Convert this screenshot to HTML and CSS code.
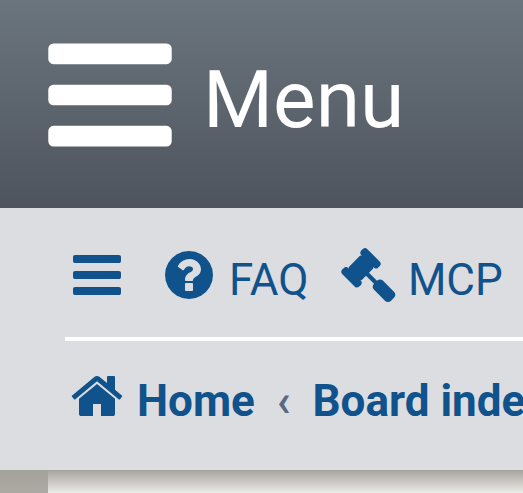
FILE: index.html
```html
<!DOCTYPE html>
<html lang="en">
<head>
    <meta charset="UTF-8">
    <meta name="viewport" content="width=device-width, initial-scale=1.0">
    <title>Board index</title>
    <link rel="stylesheet" href="styles.css">
</head>
<body>
    <a class="menu-bar" href="#">
        <svg class="menu-icon" viewBox="0 0 1792 1792"><path d="M1664 1344v128q0 26-19 45t-45 19h-1408q-26 0-45-19t-19-45v-128q0-26 19-45t45-19h1408q26 0 45 19t19 45zm0-512v128q0 26-19 45t-45 19h-1408q-26 0-45-19t-19-45v-128q0-26 19-45t45-19h1408q26 0 45 19t19 45zm0-512v128q0 26-19 45t-45 19h-1408q-26 0-45-19t-19-45v-128q0-26 19-45t45-19h1408q26 0 45 19t19 45z"/></svg>
        <span class="menu-label">Menu</span>
    </a>

    <div class="navbar">
        <ul class="nav-links">
            <li class="nav-toggle">
                <svg class="icon" viewBox="0 0 1792 1792"><path d="M1664 1344v128q0 26-19 45t-45 19h-1408q-26 0-45-19t-19-45v-128q0-26 19-45t45-19h1408q26 0 45 19t19 45zm0-512v128q0 26-19 45t-45 19h-1408q-26 0-45-19t-19-45v-128q0-26 19-45t45-19h1408q26 0 45 19t19 45zm0-512v128q0 26-19 45t-45 19h-1408q-26 0-45-19t-19-45v-128q0-26 19-45t45-19h1408q26 0 45 19t19 45z"/></svg>
            </li>
            <li class="nav-faq">
                <svg class="icon" viewBox="0 0 1792 1792"><path d="M1024 1376v-192q0-14-9-23t-23-9h-192q-14 0-23 9t-9 23v192q0 14 9 23t23 9h192q14 0 23-9t9-23zm256-672q0-88-55.500-163t-138.500-116-170-41q-243 0-371 213-15 24 8 42l132 100q7 6 19 6 16 0 25-12 53-68 86-92 34-24 86-24 48 0 85.500 26t37.500 59q0 38-20 61t-68 45q-63 28-115.500 86.500t-52.500 125.500v36q0 14 9 23t23 9h192q14 0 23-9t9-23q0-19 21.500-49.500t54.500-49.500q32-18 49-28.500t46-35 44.500-48 28-60.500 12.500-81zm384 192q0 209-103 385.500t-279.500 279.500-385.500 103-385.500-103-279.500-279.500-103-385.500 103-385.500 279.500-279.500 385.500-103 385.500 103 279.500 279.500 103 385.500z"/></svg>
                <span>FAQ</span>
            </li>
            <li class="nav-mcp">
                <svg class="icon" viewBox="0 -88 1792 1792"><path d="M1771 1440q0 53-37 90l-107 108q-39 37-91 37-53 0-90-37l-363-364q-38-36-38-90 0-53 43-96l-256-256-126 126q-14 14-34 14t-34-14q2 2 12.500 12t12.500 13 10 11.500 10 13.500 6 13.500 5.500 16.500 1.500 18q0 38-28 68-3 3-16.500 18t-19 20.500-18.500 16.500-22 15.500-22 9-26 4.500q-40 0-68-28l-408-408q-28-28-28-68 0-13 4.500-26t9-22 15.500-22 16.500-18.500 20.500-19 18-16.500q30-28 68-28 10 0 18 1.500t16.500 5.500 13.500 6 13.500 10 11.500 10 13 12.500 12 12.500q-14-14-14-34t14-34l348-348q14-14 34-14t34 14q-2-2-12.500-12t-12.500-13-10-11.500-10-13.500-6-13.500-5.500-16.500-1.500-18q0-38 28-68 3-3 16.500-18t19-20.500 18.500-16.500 22-15.500 22-9 26-4.500q40 0 68 28l408 408q28 28 28 68 0 13-4.500 26t-9 22-15.500 22-16.500 18.500-20.500 19-18 16.500q-30 28-68 28-10 0-18-1.500t-16.500-5.500-13.500-6-13.500-10-11.500-10-13-12.500-12-12.500q14 14 14 34t-14 34l-126 126 256 256q43-43 96-43 52 0 91 37l363 363q37 39 37 91z"/></svg>
                <span>MCP</span>
            </li>
        </ul>
        <div class="crumbs">
            <svg class="icon" viewBox="0 0 1792 1792"><path d="M1472 992v480q0 26-19 45t-45 19h-384v-384h-256v384h-384q-26 0-45-19t-19-45v-480q0-1 .5-3t.5-3l575-474 575 474q1 2 1 6zm223-69l-62 74q-8 9-21 11h-3q-13 0-21-7l-692-577-692 577q-12 8-24 7-13-2-21-11l-62-74q-8-10-7-23.500t11-21.500l719-599q32-26 76-26t76 26l244 204v-195q0-14 9-23t23-9h192q14 0 23 9t9 23v408l219 182q10 8 11 21.500t-7 23.500z"/></svg>
            <span class="crumb-home">Home</span>
            <span class="crumb-sep">‹</span>
            <span class="crumb-board">Board index</span>
        </div>
    </div>

    <div class="page-top">
        <div class="page-side"></div>
        <div class="page-body"></div>
    </div>
</body>
</html>
```

FILE: styles.css
```css
html, body {
    margin: 0;
    padding: 0;
}

body {
    width: 523px;
    height: 493px;
    overflow: hidden;
    font-family: Roboto, sans-serif;
    background-color: #e9e9e6;
}

/* Barra superior */
.menu-bar {
    display: flex;
    align-items: center;
    height: 208px;
    padding-left: 38px;
    box-sizing: border-box;
    background: linear-gradient(to bottom, #6b757e, #4e545e);
    color: #fff;
    text-decoration: none;
}

.menu-icon {
    width: 144px;
    height: 144px;
    margin-top: -17.4px;
    fill: #fff;
    flex: none;
}

.menu-label {
    margin-left: 21px;
    margin-top: -7px;
    font-size: 80.3px;
    line-height: 1;
}

/* Navegacion */
.navbar {
    height: 262px;
    padding: 39px 0 0 65px;
    box-sizing: border-box;
    background-color: #dcdde1;
    color: #10528b;
    white-space: nowrap;
    overflow: hidden;
}

.icon {
    width: 56px;
    height: 56px;
    fill: #10528b;
    flex: none;
}

.nav-links {
    display: flex;
    align-items: center;
    margin: 0;
    padding: 0 0 34px 4px;
    list-style: none;
    border-bottom: 4px solid #fff;
    font-size: 44px;
    line-height: 1;
}

.nav-links li {
    display: flex;
    align-items: center;
}

.nav-links span {
    margin-left: 12px;
    margin-top: 10px;
}

.nav-faq {
    margin-left: 36px;
}

.nav-mcp {
    margin-left: 31.5px;
}

.crumbs {
    display: flex;
    align-items: center;
    padding: 27px 0 0 4px;
    font-size: 44px;
    font-weight: 700;
    line-height: 1;
}

.crumbs span {
    margin-top: 10px;
}

.crumb-home {
    margin-left: 12px;
}

.crumb-sep {
    margin: 10px 22px 0 22px;
    color: #5a6a85;
}

/* Sombra de la pagina */
.page-top {
    display: flex;
    height: 23px;
}

.page-side {
    width: 48px;
    background: linear-gradient(to bottom, #a4a29b, #ada9a3);
}

.page-body {
    flex: 1;
    background: linear-gradient(to bottom, #a5a39c, #ebebe8);
}
```
